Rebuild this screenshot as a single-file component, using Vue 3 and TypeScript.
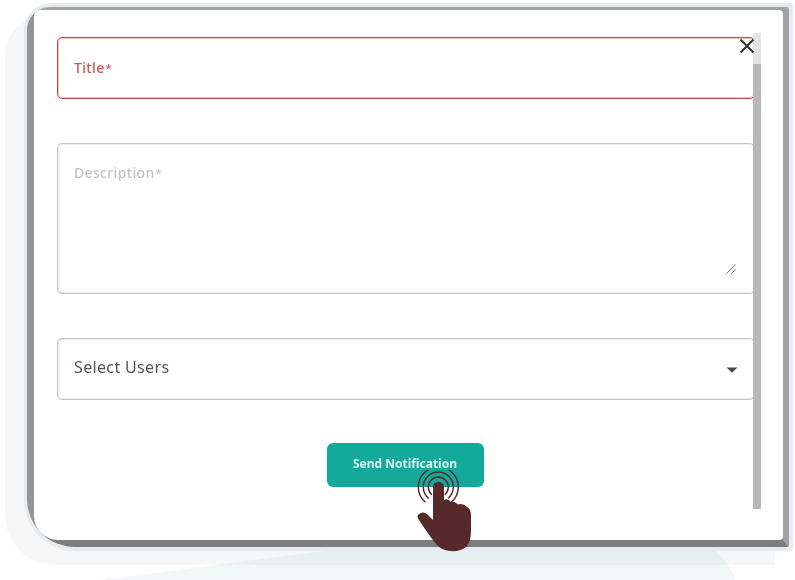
<script setup lang="ts">
const cx = 438.3
const cy = 487
const rings: string[] = [20, 15, 10].map((r) => {
  const dx = (r * 0.643).toFixed(1)
  const dy = (r * 0.766).toFixed(1)
  return `M${cx - +dx} ${cy + +dy} A${r} ${r} 0 1 1 ${cx + +dx} ${cy + +dy}`
})
</script>

<template>
  <div class="stage">
    <div class="backdrop"></div>
    <svg class="wedge" width="795" height="580" viewBox="0 0 795 580" aria-hidden="true">
      <path d="M100 580 L300 554 L420 540 L705 540 Q725 556 736 580 Z" fill="#00a08c" fill-opacity="0.06" />
    </svg>
    <div class="frame">
      <div class="shade">
        <main class="modal">
          <div class="field title"><span>Title<i class="star">*</i></span></div>
          <div class="field description">
            <span>Description<i class="star">*</i></span>
            <svg class="grip" width="12" height="12" viewBox="0 0 12 12" aria-hidden="true">
              <path d="M1.5 10.5 L10.5 1.5 M6.5 10.5 L10.5 6.5" stroke="#777" stroke-width="1" fill="none" />
            </svg>
          </div>
          <div class="field select">
            <span>Select Users</span>
            <svg class="caret" width="12" height="6" viewBox="0 0 12 6" aria-hidden="true">
              <path d="M0.5 0.5 H11.5 L6 5.8 Z" fill="#4f4648" />
            </svg>
          </div>
          <div class="actions">
            <button class="send" type="button">Send Notification</button>
            <svg class="hand" width="80" height="90" viewBox="400 470 80 90" aria-hidden="true">
              <path v-for="d in rings" :key="d" :d="d" fill="none" stroke="#58292b" stroke-width="1.4" />
              <path
                d="M433 487 Q433 482 438.5 482 Q444 482 444 487 L444 500 Q448 498 451 502 Q455 501 458 504.5 Q463 503 467 507 Q471 509 471 515 L471 531 Q471 542 466 547 Q460 552 450 551 Q441 550 436 544 Q428 534 419 520 Q416 516 419 514 Q423 511 427 514 L433 520 Z"
                fill="#58292b"
              />
            </svg>
          </div>
          <button class="close" type="button" aria-label="Close">
            <svg width="16" height="16" viewBox="0 0 16 16">
              <path d="M1.5 1.5 L14.5 14.5 M14.5 1.5 L1.5 14.5" stroke="#333" stroke-width="2" fill="none" />
            </svg>
          </button>
          <div class="scrollbar"><div class="thumb"></div></div>
        </main>
      </div>
    </div>
  </div>
</template>

<style>
html, body { margin: 0; background: #fff; }
</style>

<style scoped>
.stage {
  position: relative;
  width: 795px;
  height: 580px;
  overflow: hidden;
  padding: 3px 2px 0 24px;
  box-sizing: border-box;
  background: #fff;
  font-family: "Noto Sans", sans-serif;
  filter: blur(0.4px);
}
.backdrop {
  position: absolute;
  left: 5px;
  top: 15px;
  width: 770px;
  height: 550px;
  background: #f7f7f7;
  border-radius: 40px 0 0 50px;
}
.wedge { position: absolute; left: 0; top: 0; }
.frame {
  position: relative;
  height: 548px;
  box-sizing: border-box;
  border: solid #e6ebf0;
  border-width: 4px 4px 4px 3px;
  border-radius: 27px 3px 3px 51px;
  background: #e6ebf0;
}
.shade {
  height: 100%;
  box-sizing: border-box;
  border: solid #8f8f8f;
  border-width: 3px 6px 7px 7px;
  border-top-color: #a4a4a4;
  border-left-color: #949494;
  border-right-color: #a2a2a2;
  border-bottom-color: #7e7e7e;
  border-radius: 23px 2px 2px 48px;
  background: #8f8f8f;
}
.modal {
  position: relative;
  height: 100%;
  box-sizing: border-box;
  padding: 27px 28px 0 23px;
  background: #fff;
  border-radius: 6px 4px 4px 24px;
  display: flex;
  flex-direction: column;
  gap: 44px;
}
.field {
  position: relative;
  display: flex;
  box-sizing: border-box;
  border: 1px solid #c6c6c6;
  box-shadow: inset 0 0 0 1px #ececec;
  border-radius: 5px;
  padding-left: 16px;
  letter-spacing: 0.35px;
}
.star {
  font-style: normal;
  font-size: 11px;
  margin-left: 1px;
  vertical-align: 1px;
}
.title {
  height: 62px;
  align-items: center;
  padding-bottom: 2px;
  border-color: #d0434a;
  box-shadow: inset 0 0 0 1px #f0c4c5;
  color: #d0565a;
  font-size: 14px;
  font-weight: 500;
}
.description {
  height: 151px;
  padding-top: 19px;
  color: #c4c4c4;
  font-size: 14px;
  font-weight: 500;
  align-items: flex-start;
}
.grip { position: absolute; right: 17px; bottom: 18px; }
.select {
  height: 62px;
  align-items: center;
  justify-content: space-between;
  padding-right: 16px;
  padding-bottom: 4px;
  color: #5a5154;
  font-size: 16px;
}
.caret { margin-top: 5px; }
.actions {
  position: relative;
  display: flex;
  justify-content: center;
  margin: -1px 0 0 -2px;
}
.send {
  width: 157px;
  height: 44px;
  border: 0;
  border-radius: 6px;
  background: #13a99b;
  color: #d9f3ef;
  font: 700 12px "Noto Sans", sans-serif;
  padding: 0 0 3px;
}
.hand {
  position: absolute;
  left: 345px;
  top: 27px;
}
.close {
  position: absolute;
  left: 705px;
  top: 28px;
  z-index: 2;
  width: 16px;
  height: 16px;
  padding: 0;
  border: 0;
  background: none;
  line-height: 0;
}
.scrollbar {
  position: absolute;
  left: 719px;
  top: 23px;
  width: 8px;
  height: 476px;
  background: #e3e3e3;
}
.thumb {
  margin-top: 31px;
  height: 445px;
  background: #b8b8b8;
}
</style>
